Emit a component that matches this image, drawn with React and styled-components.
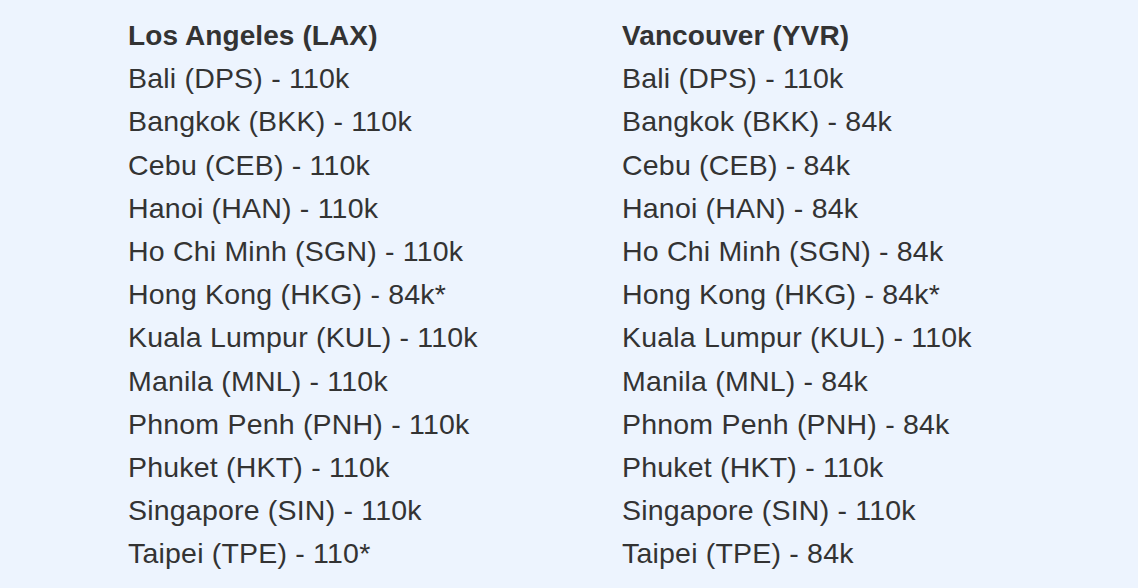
import React from 'react';
import styled, { createGlobalStyle } from 'styled-components';

const GlobalStyle = createGlobalStyle`
  html, body {
    margin: 0;
    padding: 0;
    background: #edf4fe;
  }
  body {
    font-family: "Liberation Sans", Arial, Helvetica, sans-serif;
    color: #333333;
  }
`;

const Page = styled.div`
  width: 1138px;
  height: 588px;
  box-sizing: border-box;
  padding: 14px 0 0 128px;
  background: #edf4fe;
  overflow: hidden;
`;

const Columns = styled.div`
  display: grid;
  grid-template-columns: 494px 494px;
`;

const List = styled.ul`
  list-style: none;
  margin: 0;
  padding: 0;
`;

const Item = styled.li`
  font-size: ${({ $heading }) => ($heading ? '28px' : '28.5px')};
  line-height: 43.2px;
  letter-spacing: ${({ $heading }) => ($heading ? '0.1px' : '0.2px')};
  font-weight: ${({ $heading }) => ($heading ? 700 : 400)};
  white-space: nowrap;
`;

const routes = [
  {
    origin: 'Los Angeles (LAX)',
    items: [
      'Bali (DPS) - 110k',
      'Bangkok (BKK) - 110k',
      'Cebu (CEB) - 110k',
      'Hanoi (HAN) - 110k',
      'Ho Chi Minh (SGN) - 110k',
      'Hong Kong (HKG) - 84k*',
      'Kuala Lumpur (KUL) - 110k',
      'Manila (MNL) - 110k',
      'Phnom Penh (PNH) - 110k',
      'Phuket (HKT) - 110k',
      'Singapore (SIN) - 110k',
      'Taipei (TPE) - 110*',
    ],
  },
  {
    origin: 'Vancouver (YVR)',
    items: [
      'Bali (DPS) - 110k',
      'Bangkok (BKK) - 84k',
      'Cebu (CEB) - 84k',
      'Hanoi (HAN) - 84k',
      'Ho Chi Minh (SGN) - 84k',
      'Hong Kong (HKG) - 84k*',
      'Kuala Lumpur (KUL) - 110k',
      'Manila (MNL) - 84k',
      'Phnom Penh (PNH) - 84k',
      'Phuket (HKT) - 110k',
      'Singapore (SIN) - 110k',
      'Taipei (TPE) - 84k',
    ],
  },
];

const App = () => (
  <>
    <GlobalStyle />
    <Page>
      <Columns>
        {routes.map((col) => (
          <List key={col.origin}>
            <Item $heading>{col.origin}</Item>
            {col.items.map((item) => (
              <Item key={item}>{item}</Item>
            ))}
          </List>
        ))}
      </Columns>
    </Page>
  </>
);

export default App;
